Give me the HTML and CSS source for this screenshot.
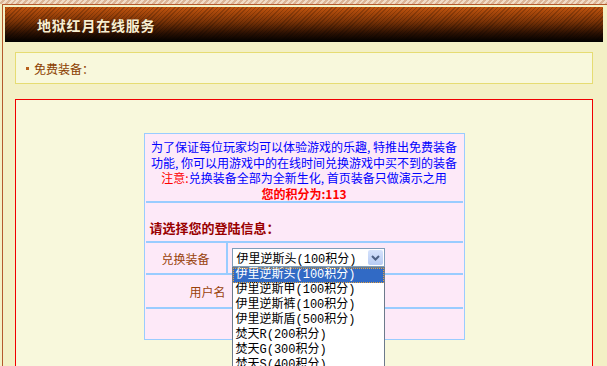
FILE: index.html
```html
<!DOCTYPE html>
<html lang="zh-CN">
<head>
    <meta charset="utf-8" />
    <title>地狱红月在线服务</title>
    <link rel="stylesheet" href="styles.css">
</head>
<body>
    <div class="top-strip"></div>
    <div class="frame">
        <div class="header">
            <h1>地狱红月在线服务</h1>
        </div>

        <div class="crumb">
            <span class="dot"></span>免费装备：
        </div>

        <div class="main-box">
            <div class="panel">
                <div class="row intro">
                    为了保证每位玩家均可以体验游戏的乐趣, 特推出免费装备<br>
                    功能, 你可以用游戏中的在线时间兑换游戏中买不到的装备<br>
                    <span class="red">注意:</span>兑换装备全部为全新生化, 首页装备只做演示之用<br>
                    <b class="red">您的积分为:113</b>
                </div>
                <div class="row title-row">请选择您的登陆信息：</div>
                <div class="row field-row">
                    <div class="label center">兑换装备</div>
                    <div class="value">
                        <div class="fake-select">
                            <span class="sel-text">伊里逆斯头(100积分)</span>
                            <span class="sel-btn">
                                <svg width="9" height="6" viewBox="0 0 9 6"><path d="M1 1 L4.5 4.5 L8 1" fill="none" stroke="#4d6185" stroke-width="2"/></svg>
                            </span>
                            <ul class="drop-list">
                                <li class="active">伊里逆斯头(100积分)</li>
                                <li>伊里逆斯甲(100积分)</li>
                                <li>伊里逆斯裤(100积分)</li>
                                <li>伊里逆斯盾(500积分)</li>
                                <li>焚天R(200积分)</li>
                                <li>焚天G(300积分)</li>
                                <li>焚天S(400积分)</li>
                            </ul>
                        </div>
                    </div>
                </div>
                <div class="row field-row tall">
                    <div class="label right">用户名</div>
                    <div class="value"></div>
                </div>
                <div class="row last-row"></div>
            </div>
        </div>
    </div>
</body>
</html>
```

FILE: styles.css
```css
html, body {
    overflow: hidden;
}

body {
    margin: 0;
    background-color: #f3f0c5;
    font-family: "Noto Sans CJK SC", "Liberation Sans", sans-serif;
    font-size: 12px;
}

.top-strip {
    height: 4px;
    background-color: #e8cbb0;
    background-image: repeating-linear-gradient(135deg, #f1dcc6 0 2px, #dcb596 2px 4px);
}

.frame {
    margin-left: 2px;
    border-left: 1px solid #b4582c;
    border-top: 1px solid #b4582c;
    padding: 2px 4px 0 2px;
}

.header {
    height: 35px;
    background-image:
        repeating-linear-gradient(135deg, rgba(0, 0, 0, 0.2) 0 1px, rgba(255, 255, 255, 0) 1px 3px),
        linear-gradient(to bottom, #c2540e 0%, #7e3406 40%, #2a1002 75%, #000 100%);
    display: flex;
    align-items: center;
    padding-left: 32px;
}

.header h1 {
    margin: 0;
    font-size: 14px;
    font-weight: bold;
    letter-spacing: 0.8px;
    color: #f8efd2;
    text-shadow: 1px 1px 0 #3a1400;
}

.crumb {
    margin: 10px 10px 0;
    height: 30px;
    border: 1px solid #e6dc72;
    background-color: #f8f8dc;
    color: #8b3e00;
    display: flex;
    align-items: center;
    padding-left: 10px;
}

.crumb .dot {
    width: 3px;
    height: 3px;
    background-color: #b8601c;
    margin-right: 5px;
}

.main-box {
    margin: 15px 10px 0;
    border: 1px solid #f00000;
    background-color: #f8f8dc;
    height: 300px;
    padding-top: 33px;
}

.panel {
    width: 321px;
    box-sizing: border-box;
    margin: 0 auto;
    border: 1px solid #99ccff;
    padding: 1px;
    background-color: #fde9f8;
}

.row {
    border-bottom: 2px solid #99ccff;
    box-sizing: border-box;
}

.intro {
    height: 68px;
    padding-top: 4px;
    line-height: 15.5px;
    text-align: center;
    color: #0000ff;
}

.red {
    color: #ff0000;
}

.title-row {
    height: 40px;
    padding: 17px 0 0 4px;
    line-height: 16px;
    font-size: 13px;
    font-weight: bold;
    color: #990000;
}

.field-row {
    height: 32px;
    display: flex;
}

.field-row.tall {
    height: 34px;
}

.label {
    width: 80px;
    border-right: 2px solid #99ccff;
    color: #99420a;
    display: flex;
    align-items: center;
}

.label.center {
    justify-content: center;
}

.label.right {
    justify-content: flex-end;
    padding-right: 7px;
}

.value {
    flex: 1;
    padding: 5px 0 0 4px;
}

.last-row {
    height: 29px;
    border-bottom: none;
}

.fake-select {
    position: relative;
    width: 153px;
    height: 19px;
    box-sizing: border-box;
    border: 1px solid #7f9db9;
    background-color: #fff;
    display: flex;
    align-items: center;
    justify-content: space-between;
    font-family: "Liberation Mono", "Noto Sans CJK SC", monospace;
}

.sel-text {
    padding-left: 4px;
    color: #000;
}

.sel-btn {
    width: 15px;
    height: 15px;
    margin-right: 1px;
    border-radius: 2px;
    background: linear-gradient(to bottom, #d6e3fc, #b7cbf4);
    display: flex;
    align-items: center;
    justify-content: center;
}

.drop-list {
    position: absolute;
    top: 18px;
    left: -1px;
    width: 153px;
    box-sizing: border-box;
    margin: 0;
    padding: 0;
    list-style: none;
    border: 1px solid #6c7a8c;
    background-color: #fff;
}

.drop-list li {
    height: 15px;
    line-height: 15px;
    padding-left: 3px;
    color: #000;
}

.drop-list li.active {
    background-color: #316ac5;
    color: #fff;
    outline: 1px dotted #e0a040;
    outline-offset: -1px;
}
```
